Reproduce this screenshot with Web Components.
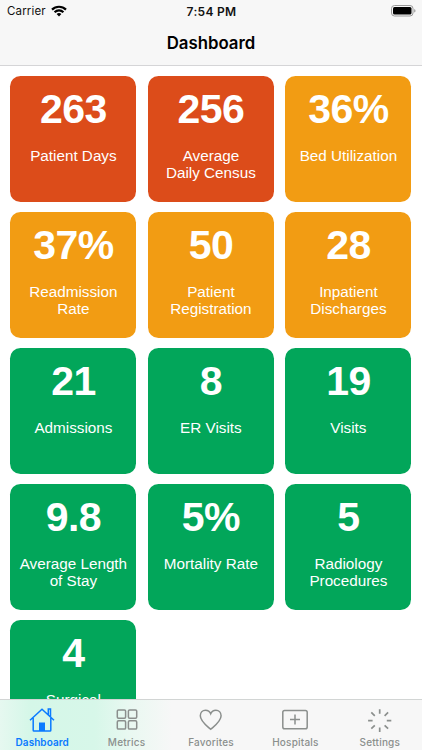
<!DOCTYPE html>
<html lang="en">
<head>
<meta charset="utf-8">
<title>Dashboard</title>
<style>
    body {
        margin: 0;
        background: #fff;
        font-family: Inter, "Liberation Sans", sans-serif;
    }
</style>
</head>
<body>
<app-screen>
    <status-bar slot="top" carrier="Carrier" time="7:54 PM"></status-bar>
    <nav-header slot="top">Dashboard</nav-header>
    <metric-grid>
        <metric-tile value="263" level="high">Patient Days</metric-tile>
        <metric-tile value="256" level="high">Average<br>Daily Census</metric-tile>
        <metric-tile value="36%" level="medium">Bed Utilization</metric-tile>
        <metric-tile value="37%" level="medium">Readmission<br>Rate</metric-tile>
        <metric-tile value="50" level="medium">Patient<br>Registration</metric-tile>
        <metric-tile value="28" level="medium">Inpatient<br>Discharges</metric-tile>
        <metric-tile value="21">Admissions</metric-tile>
        <metric-tile value="8">ER Visits</metric-tile>
        <metric-tile value="19">Visits</metric-tile>
        <metric-tile value="9.8">Average Length<br>of Stay</metric-tile>
        <metric-tile value="5%">Mortality Rate</metric-tile>
        <metric-tile value="5">Radiology<br>Procedures</metric-tile>
        <metric-tile value="4">Surgical</metric-tile>
    </metric-grid>
    <tab-bar slot="bottom">
        <tab-item icon="home" active>Dashboard</tab-item>
        <tab-item icon="grid">Metrics</tab-item>
        <tab-item icon="heart">Favorites</tab-item>
        <tab-item icon="hospital">Hospitals</tab-item>
        <tab-item icon="rays">Settings</tab-item>
    </tab-bar>
</app-screen>

<script>
// Full height layout: top bars, clipped content, bottom bar
class AppScreen extends HTMLElement {
    constructor() {
        super();
        this.attachShadow({ mode: 'open' }).innerHTML = `
            <style>
                :host {
                    display: flex;
                    flex-direction: column;
                    height: 100vh;
                    overflow: hidden;
                }
                header {
                    flex: none;
                    height: 65px;
                    background: #f7f7f7;
                    border-bottom: 1px solid #d5d5d7;
                }
                main {
                    flex: 1;
                    min-height: 0;
                    overflow: hidden;
                }
            </style>
            <header><slot name="top"></slot></header>
            <main><slot></slot></main>
            <slot name="bottom"></slot>
        `;
    }
}

class StatusBar extends HTMLElement {
    connectedCallback() {
        this.attachShadow({ mode: 'open' }).innerHTML = `
            <style>
                :host {
                    display: grid;
                    grid-template-columns: 1fr auto 1fr;
                    align-items: center;
                    height: 22px;
                    padding: 0 6px 0 7px;
                    font-size: 11.5px;
                    color: #111;
                }
                .left {
                    display: flex;
                    align-items: center;
                    gap: 5px;
                    letter-spacing: 0.15px;
                }
                .time {
                    font-weight: 600;
                    font-size: 12px;
                    letter-spacing: 0.3px;
                }
                .battery {
                    justify-self: end;
                }
                svg {
                    display: block;
                }
            </style>
            <div class="left">
                <span>${this.getAttribute('carrier')}</span>
                <svg width="16" height="12" viewBox="0 0 16 12" fill="none" stroke="#000" stroke-width="2.2">
                    <path d="M1 4.6a10 10 0 0 1 14 0M3.6 7.3a6.2 6.2 0 0 1 8.8 0"/>
                    <path d="M8 11.6 5.6 9.1a3.4 3.4 0 0 1 4.8 0z" fill="#000" stroke="none"/>
                </svg>
            </div>
            <span class="time">${this.getAttribute('time')}</span>
            <svg class="battery" width="25" height="12" viewBox="0 0 25 12">
                <rect x="0.5" y="0.5" width="21.5" height="10.5" rx="3" fill="none" stroke="#999"/>
                <rect x="2" y="2" width="18.5" height="7.5" rx="1.5"/>
                <path d="M23.2 4v3.6q1.3-.4 1.3-1.8T23.2 4" fill="#999"/>
            </svg>
        `;
    }
}

class NavHeader extends HTMLElement {
    constructor() {
        super();
        this.attachShadow({ mode: 'open' }).innerHTML = `
            <style>
                :host {
                    display: flex;
                    align-items: center;
                    justify-content: center;
                    height: 42px;
                    font-size: 16.8px;
                    font-weight: 600;
                    color: #000;
                }
            </style>
            <slot></slot>
        `;
    }
}

class MetricGrid extends HTMLElement {
    constructor() {
        super();
        this.attachShadow({ mode: 'open' }).innerHTML = `
            <style>
                :host {
                    display: grid;
                    grid-template-columns: repeat(3, 126px);
                    grid-auto-rows: 126px;
                    gap: 10.1px 11.5px;
                    padding: 9.5px 10.4px;
                }
            </style>
            <slot></slot>
        `;
    }
}

class MetricTile extends HTMLElement {
    connectedCallback() {
        this.attachShadow({ mode: 'open' }).innerHTML = `
            <style>
                :host {
                    display: block;
                    border-radius: 10.5px;
                    background: #02a65a;
                    color: #fff;
                    text-align: center;
                    font-family: "Liberation Sans", Arial, sans-serif;
                }
                :host([level="high"]) {
                    background: #dc4c1a;
                }
                :host([level="medium"]) {
                    background: #f29c13;
                }
                .value {
                    height: 48px;
                    padding-top: 9.5px;
                    font-size: 41px;
                    line-height: 48px;
                    font-weight: bold;
                    letter-spacing: -0.6px;
                }
                .label {
                    padding-top: 14px;
                    font-size: 15.25px;
                    line-height: 17px;
                    white-space: nowrap;
                }
            </style>
            <div class="value">${this.getAttribute('value')}</div>
            <div class="label"><slot></slot></div>
        `;
    }
}

class TabBar extends HTMLElement {
    constructor() {
        super();
        this.attachShadow({ mode: 'open' }).innerHTML = `
            <style>
                :host {
                    display: grid;
                    grid-template-columns: repeat(5, 1fr);
                    flex: none;
                    height: 50px;
                    border-top: 1px solid #d2d5d4;
                    background: linear-gradient(90deg, #e6f8f0 0, #d5f7e8 30px, #d7f7e9 95px, #e9f8f1 130px, #f7f7f7 172px);
                }
            </style>
            <slot></slot>
        `;
    }
}

const icons = {
    home: `
        <path d="M1 13.2 13 2.2l12 11M4.2 11v12.2q0 .8.8.8h16q.8 0 .8-.8V11M19.3 7.6V2h2.2v7.8"/>
        <path d="M10 24v-8.5h6V24z" fill="currentColor" stroke="none"/>`,
    grid: `
        <rect x="3.3" y="2.9" width="8.3" height="8.3" rx="1.2"/>
        <rect x="14.4" y="2.9" width="8.3" height="8.3" rx="1.2"/>
        <rect x="3.3" y="13.8" width="8.3" height="8.3" rx="1.2"/>
        <rect x="14.4" y="13.8" width="8.3" height="8.3" rx="1.2"/>`,
    heart: `<path d="M12.7 22.3C9.3 19.2 2.3 14.5 2.3 8.8 2.3 5.4 4.6 3.2 7.5 3.2 9.9 3.2 11.8 4.6 12.7 6.8 13.6 4.6 15.5 3.2 17.9 3.2c2.9 0 5.2 2.2 5.2 5.6 0 5.7-7 10.4-10.4 13.5z"/>`,
    hospital: `
        <rect x="0.8" y="3.4" width="24.4" height="18.4" rx="1.8"/>
        <path d="M13 7.6v10M8 12.6h10"/>`,
    rays: `<path d="M12.7 2.3v4.5M12.7 20.5V25M1.1 13.6h4.5M19.8 13.6h4.5M4.3 5.4l3.5 3.4M17.6 18.3l3.5 3.4M4.3 21.7l3.5-3.4M17.6 8.8l3.5-3.4" stroke-width="1.7"/>`
};

class TabItem extends HTMLElement {
    connectedCallback() {
        this.attachShadow({ mode: 'open' }).innerHTML = `
            <style>
                :host {
                    display: flex;
                    flex-direction: column;
                    align-items: center;
                    padding-top: 7px;
                    color: #8b8f8d;
                    font-size: 10px;
                    line-height: 12px;
                    font-weight: 500;
                    letter-spacing: 0.2px;
                }
                :host([active]) {
                    color: #0a7aff;
                    font-weight: 600;
                    letter-spacing: 0.05px;
                }
                svg {
                    display: block;
                    margin-bottom: 2.5px;
                }
            </style>
            <svg width="26" height="26" viewBox="0 0 26 26" fill="none" stroke="currentColor" stroke-width="1.5">${icons[this.getAttribute('icon')]}</svg>
            <span><slot></slot></span>
        `;
    }
}

customElements.define('app-screen', AppScreen);
customElements.define('status-bar', StatusBar);
customElements.define('nav-header', NavHeader);
customElements.define('metric-grid', MetricGrid);
customElements.define('metric-tile', MetricTile);
customElements.define('tab-bar', TabBar);
customElements.define('tab-item', TabItem);
</script>
</body>
</html>
